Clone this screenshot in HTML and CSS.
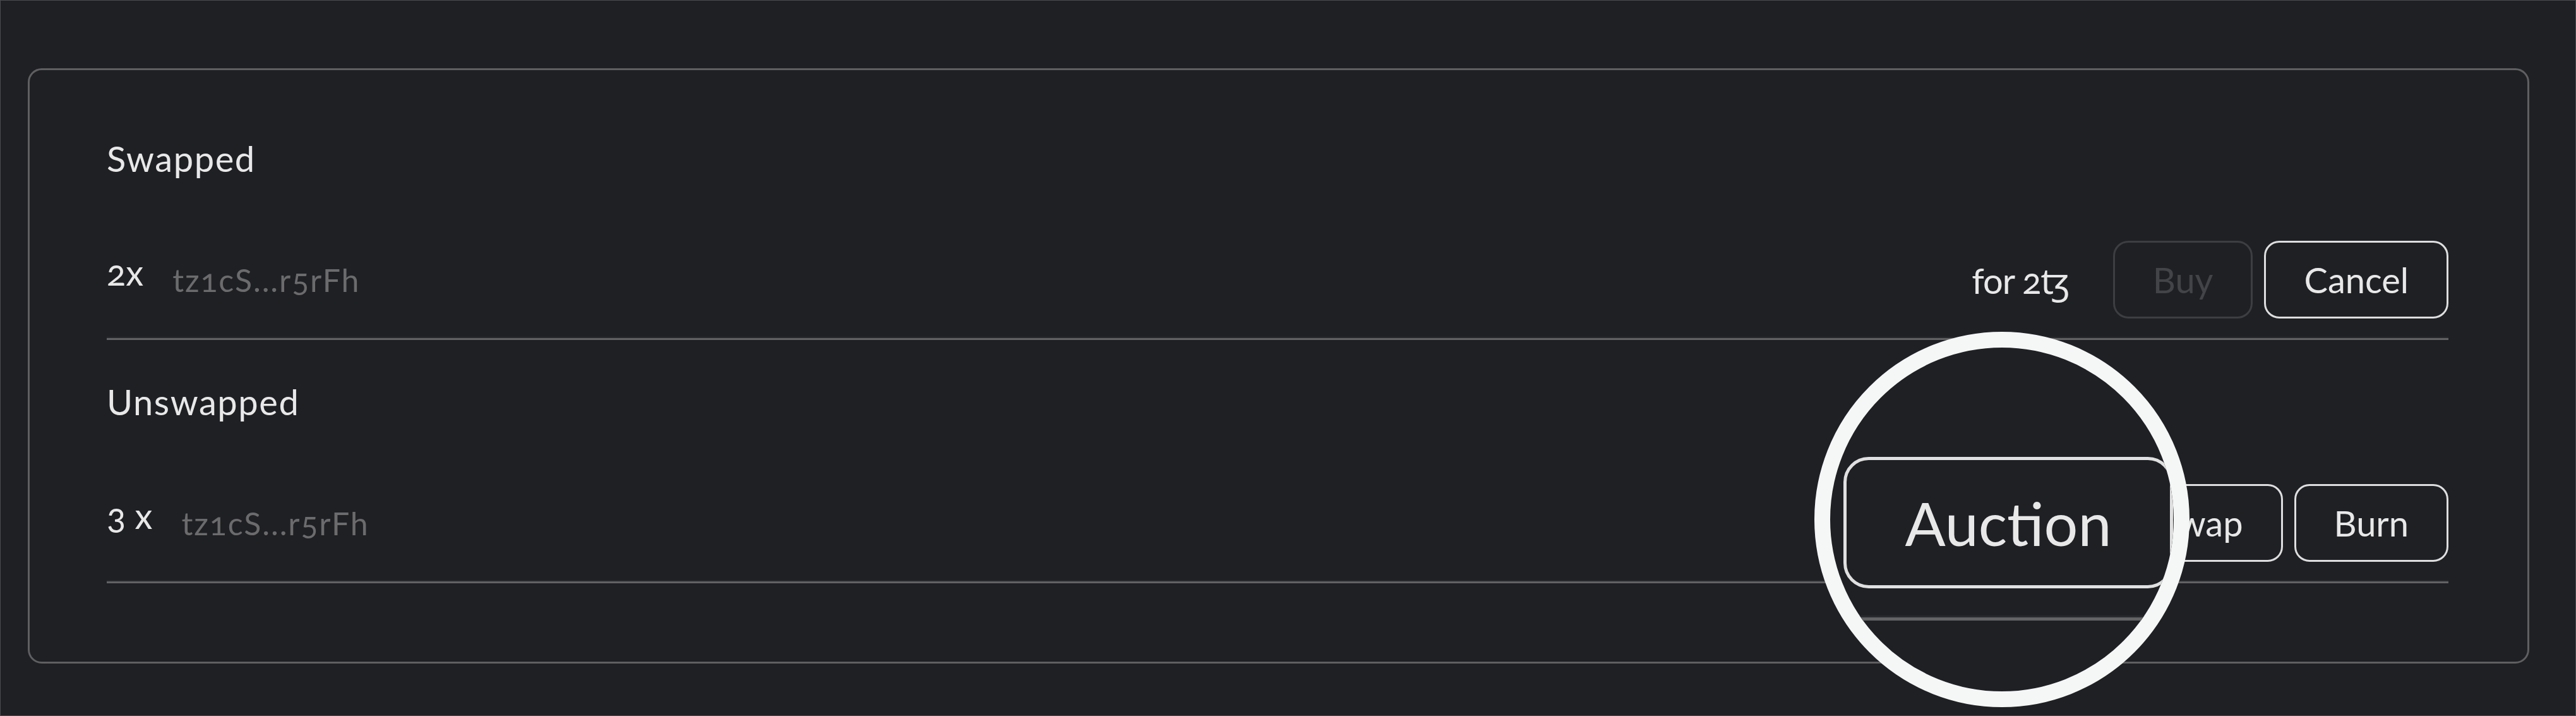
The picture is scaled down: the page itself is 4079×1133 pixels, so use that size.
FILE: index.html
```html
<!DOCTYPE html>
<html lang="en">
<head>
<meta charset="utf-8">
<title>Swaps</title>
<link rel="stylesheet" href="styles.css">
</head>
<body>
<div class="screen">
  <section class="card">
    <div class="group">
      <h2 class="group-title">Swapped</h2>
      <div class="row">
        <div class="owner">
          <span class="qty">2x</span>
          <span class="addr">tz1cS...r5rFh</span>
        </div>
        <div class="actions">
          <span class="price">for 2ꜩ</span>
          <button class="btn btn-disabled" disabled>Buy</button>
          <button class="btn">Cancel</button>
        </div>
      </div>
    </div>
    <div class="group group-next">
      <h2 class="group-title">Unswapped</h2>
      <div class="row">
        <div class="owner">
          <span class="qty">3 x</span>
          <span class="addr">tz1cS...r5rFh</span>
        </div>
        <div class="actions">
          <button class="btn">Auction</button>
          <button class="btn">Swap</button>
          <button class="btn">Burn</button>
        </div>
      </div>
    </div>
  </section>
  <div class="magnifier" aria-hidden="true">
    <div class="magnifier-btn">Auction</div>
    <div class="magnifier-rule"></div>
  </div>
</div>
</body>
</html>
```

FILE: styles.css
```css
html, body {
  margin: 0;
  padding: 0;
  background: #1f2024;
}

body {
  font-family: Lato, "Noto Sans", "DejaVu Sans", sans-serif;
  color: #e6e6e6;
  font-variant-numeric: oldstyle-nums;
}

.screen {
  position: relative;
  width: 4079px;
  height: 1133px;
  box-sizing: border-box;
  border: 1px solid #4a4b4e;
  padding: 107px 0 0 43px;
  overflow: hidden;
}

.card {
  width: 3961px;
  box-sizing: border-box;
  border: 3px solid #5f5f61;
  border-radius: 22px;
  padding: 106px 125px 124px 122px;
}

.group-next {
  margin-top: 64px;
}

.group-title {
  margin: 0;
  font-size: 56px;
  line-height: 67px;
  font-weight: 400;
  letter-spacing: 1.6px;
  color: #e8e8e8;
}

.row {
  display: flex;
  justify-content: space-between;
  align-items: center;
  padding: 97px 0 31px;
  border-bottom: 3px solid #626264;
  box-shadow: inset 0 -2px 0 #292a2e;
}

.owner {
  display: flex;
  align-items: center;
  gap: 46px;
}

.qty {
  font-size: 56px;
  color: #e8e8e8;
  margin-bottom: 25px;
}

.addr {
  font-size: 50px;
  letter-spacing: 1.9px;
  color: #6b6b6d;
}

.actions {
  display: flex;
  align-items: center;
  gap: 18px;
}

.price {
  font-size: 56px;
  letter-spacing: -1px;
  color: #e8e8e8;
  margin-right: 52px;
}

.btn {
  font-family: inherit;
  font-variant-numeric: inherit;
  font-size: 56px;
  line-height: 57px;
  color: #e8e8e8;
  background: transparent;
  border: 3px solid #dedede;
  border-radius: 24px;
  padding: 30px 60px;
  margin: 0;
}

.btn-disabled {
  color: #434447;
  border-color: #3d3e41;
}

.magnifier {
  position: absolute;
  left: 2872px;
  top: 524px;
  width: 594px;
  height: 594px;
  box-sizing: border-box;
  border: 25px solid #f5f7f6;
  border-radius: 50%;
  background: #1f2024;
  overflow: hidden;
}

.magnifier-btn {
  position: absolute;
  left: 21px;
  top: 173px;
  width: 522px;
  height: 208px;
  box-sizing: border-box;
  border: 5px solid #e0e0e0;
  border-radius: 40px;
  display: flex;
  align-items: center;
  justify-content: center;
  font-size: 95px;
  color: #e8e8e8;
}

.magnifier-rule {
  position: absolute;
  left: 0;
  right: 0;
  top: 424px;
  height: 3px;
  background: #292a2e;
  border-bottom: 5px solid #636365;
}
```
